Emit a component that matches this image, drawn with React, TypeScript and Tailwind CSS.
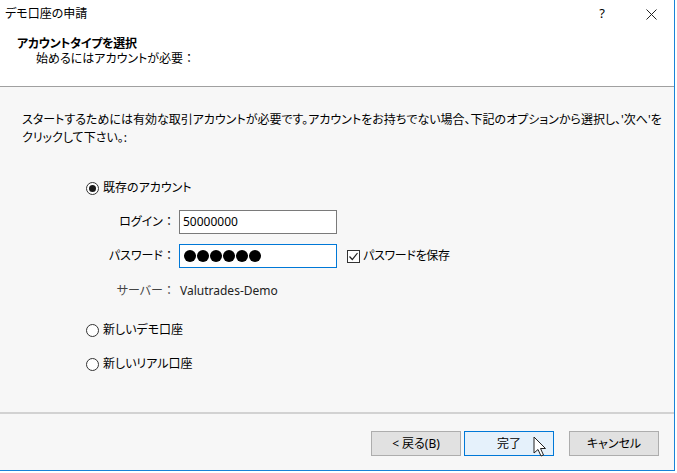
import React from "react";

function Radio({ checked, label }: { checked?: boolean; label: string }) {
  return (
    <div className="flex items-center h-[18px]">
      <span className="w-[13px] h-[13px] rounded-full border border-[#333] bg-white flex items-center justify-center">
        {checked && <span className="w-[7px] h-[7px] rounded-full bg-[#1a1a1a]" />}
      </span>
      <span className="ml-[4px]">{label}</span>
    </div>
  );
}

function Btn({ label, primary }: { label: string; primary?: boolean }) {
  return (
    <button
      className={`w-[90px] h-[25px] flex items-center justify-center text-[12px] text-black border ${
        primary ? "bg-[#e5f1fb] border-[#0078d7]" : "bg-[#e1e1e1] border-[#adadad]"
      }`}
    >
      {label}
    </button>
  );
}

export default function App() {
  return (
    <div className="w-[677px] h-[473px] bg-white overflow-hidden font-['Noto_Sans','Noto_Sans_CJK_JP',sans-serif] [font-feature-settings:'palt'] text-[12px] text-black">
      <div className="relative w-[675px] h-[471px] border-r border-b border-[#1883d7] flex flex-col">
        {/* Title bar + header */}
        <div className="bg-white h-[87px] border-b border-[#a0a0a0]">
          <div className="h-[28px] flex items-center pl-[5px] pr-[17px]">
            <span className="leading-none">デモ口座の申請</span>
            <span className="ml-auto mr-[41px] text-[13px]">?</span>
            <svg width="11" height="11" viewBox="0 0 11 11">
              <path d="M0.5 0.5 L10.5 10.5 M10.5 0.5 L0.5 10.5" stroke="#222" strokeWidth="1" />
            </svg>
          </div>
          <div className="pt-[8px] pl-[17px] leading-[16px]">
            <div className="font-bold tracking-[-0.3px]">アカウントタイプを選択</div>
            <div className="pl-[19px] mt-[-1px]">始めるにはアカウントが必要 ：</div>
          </div>
        </div>

        {/* Body */}
        <div className="h-[325px] bg-[#f7f7f7] pt-[24px] pl-[22px]">
          <div className="leading-[18px] whitespace-nowrap">
            <div>スタートするためには有効な取引アカウントが必要です。アカウントをお持ちでない場合、下記のオプションから選択し、'次へ'を</div>
            <div>クリックして下さい。:</div>
          </div>

          <div className="pl-[64px] mt-[32px]">
            <Radio checked label="既存のアカウント" />
          </div>

          <div className="mt-[13px] grid grid-cols-[154px_158px_auto] gap-x-[3px] gap-y-[10px] items-center">
            <div className="text-right pr-[4px]">ログイン ：</div>
            <div className="h-[24px] bg-white border border-[#7a7a7a] flex items-center pl-[3px]">50000000</div>
            <div />

            <div className="text-right pr-[4px]">パスワード ：</div>
            <div className="h-[24px] bg-white border border-[#0078d7] flex items-center pl-[4px] gap-[1px]">
              {[0, 1, 2, 3, 4, 5].map((i) => (
                <span key={i} className="w-[12px] h-[12px] rounded-full bg-black" />
              ))}
            </div>
            <div className="flex items-center pl-[7px]">
              <span className="w-[13px] h-[13px] border border-[#333] bg-white flex items-center justify-center">
                <svg width="11" height="11" viewBox="0 0 11 11">
                  <path d="M1.5 5.5 L4.3 8.5 L9.5 2" fill="none" stroke="#222" strokeWidth="1.2" />
                </svg>
              </span>
              <span className="ml-[3px] tracking-[-0.3px]">パスワードを保存</span>
            </div>
          </div>

          <div className="mt-[14px] flex h-[18px] items-center">
            <div className="w-[154px] text-right pr-[4px] text-[#444]">サーバー ：</div>
            <div className="ml-[4px] text-[#222]">Valutrades-Demo</div>
          </div>

          <div className="pl-[64px] mt-[21px]">
            <Radio label="新しいデモ口座" />
          </div>
          <div className="pl-[64px] mt-[16px]">
            <Radio label="新しいリアル口座" />
          </div>
        </div>

        {/* Footer */}
        <div className="flex-1 bg-[#f7f7f7] border-t-2 border-[#d2d2d2] pt-[17px] pl-[371px] flex items-start">
          <Btn label="< 戻る(B)" />
          <div className="ml-[3px]">
            <Btn label="完了" primary />
          </div>
          <div className="ml-[15px]">
            <Btn label="キャンセル" />
          </div>
        </div>

        {/* mouse cursor */}
        <svg className="absolute left-[533px] top-[436px]" width="14" height="22" viewBox="0 0 14 22">
          <path d="M1 1 L1 17 L5 13.5 L8 20 L10.5 19 L7.5 12.5 L12.5 12.5 Z" fill="white" stroke="#222" strokeWidth="1" strokeLinejoin="round" />
        </svg>
      </div>
    </div>
  );
}
